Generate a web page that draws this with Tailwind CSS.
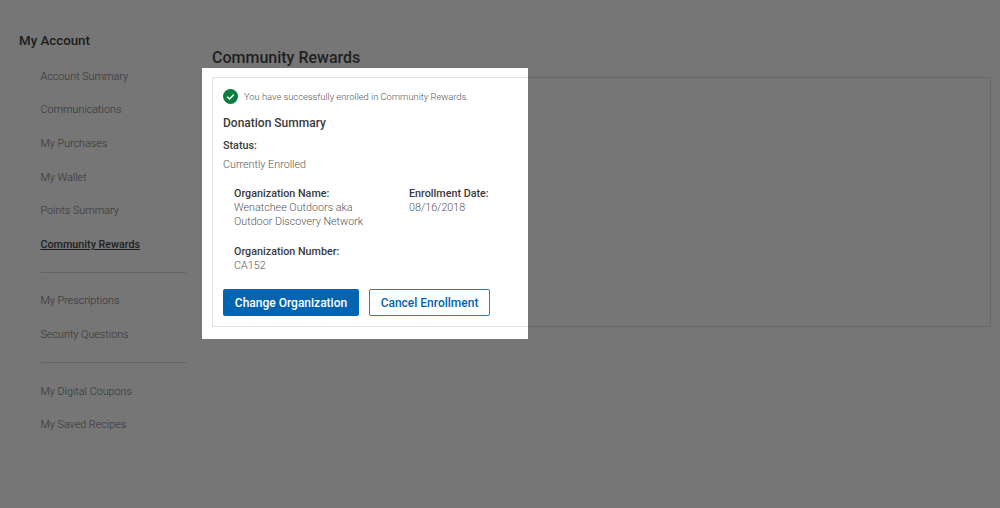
<!DOCTYPE html>
<html>
<head>
<script src="https://cdn.jsdelivr.net/npm/@tailwindcss/browser@4"></script>
</head>
<body class="m-0">
<div class="relative w-[1000px] h-[508px] overflow-hidden bg-[#767676] font-['Roboto',sans-serif] flex">
  <aside class="w-[212px] shrink-0 pl-[19px] pt-[32px]">
    <h2 class="text-[13.3px] leading-[18px] font-medium text-[#1c1c1c] m-0">My Account</h2>
    <nav class="pl-[21.5px] pt-[17.5px] w-[167px] text-[10.75px] leading-[17px] font-light text-[#333] flex flex-col">
      <a class="h-[33.7px]">Account Summary</a>
      <a class="h-[33.7px]">Communications</a>
      <a class="h-[33.7px]">My Purchases</a>
      <a class="h-[33.7px]">My Wallet</a>
      <a class="h-[33.7px]">Points Summary</a>
      <a class="h-[36px] font-medium text-[#1e1e1e] underline">Community Rewards</a>
      <div class="h-px bg-[#646464]"></div>
      <a class="h-[33.7px] mt-[19.5px]">My Prescriptions</a>
      <a class="h-[36px]">Security Questions</a>
      <div class="h-px bg-[#646464]"></div>
      <a class="h-[33.7px] mt-[19.5px]">My Digital Coupons</a>
      <a class="h-[33.7px]">My Saved Recipes</a>
    </nav>
  </aside>
  <main class="pt-[48px] w-[779px]">
    <h1 class="text-[16px] leading-[20px] font-medium text-[#1f1f1f] m-0">Community Rewards</h1>
    <div class="mt-[9px] h-[250px] border border-[#696969]"></div>
  </main>

  <div class="absolute left-[202px] top-[68px] w-[326px] h-[271px] bg-white pl-[10px] pt-[9px]">
    <div class="h-[250px] border-l border-t border-b border-[#e3e3e3] pl-[10px] pt-[11px] flex flex-col">
      <div class="flex items-center gap-[6px] h-[15px]">
        <svg class="w-[15px] h-[15px]" viewBox="0 0 15 15"><circle cx="7.5" cy="7.5" r="7.5" fill="#0b7d3e"/><path d="M4.2 7.8 L6.5 10 L10.9 5.4" fill="none" stroke="#fff" stroke-width="1.5"/></svg>
        <span class="text-[9.33px] leading-[14px] font-light text-[#555]">You have successfully enrolled in Community Rewards.</span>
      </div>
      <h3 class="mt-[11px] text-[12px] leading-[16px] font-medium text-[#3a3a3a] m-0">Donation Summary</h3>
      <div class="mt-[7px] text-[10.75px] leading-[16px] font-medium text-[#3a3a3a]">Status:</div>
      <div class="mt-[3px] text-[10.75px] leading-[16px] font-light text-[#555]">Currently Enrolled</div>
      <div class="mt-[14px] pl-[11px] grid grid-cols-[175px_1fr] text-[10.75px] leading-[14px]">
        <div>
          <div class="font-medium text-[#3a3a3a]">Organization Name:</div>
          <div class="font-light text-[#555]">Wenatchee Outdoors aka<br>Outdoor Discovery Network</div>
        </div>
        <div>
          <div class="font-medium text-[#3a3a3a]">Enrollment Date:</div>
          <div class="font-light text-[#555]">08/16/2018</div>
        </div>
        <div class="mt-[16px] col-span-2">
          <div class="font-medium text-[#3a3a3a]">Organization Number:</div>
          <div class="font-light text-[#555]">CA152</div>
        </div>
      </div>
      <div class="mt-[16px] flex gap-[10px]">
        <button class="w-[136px] h-[27px] rounded-[2px] bg-[#0064b1] text-white text-[12px] font-medium">Change Organization</button>
        <button class="w-[121px] h-[27px] rounded-[2px] border border-[#2a7dbd] bg-white text-[#0064b1] text-[12px] font-medium">Cancel Enrollment</button>
      </div>
    </div>
  </div>
</div>
</body>
</html>
